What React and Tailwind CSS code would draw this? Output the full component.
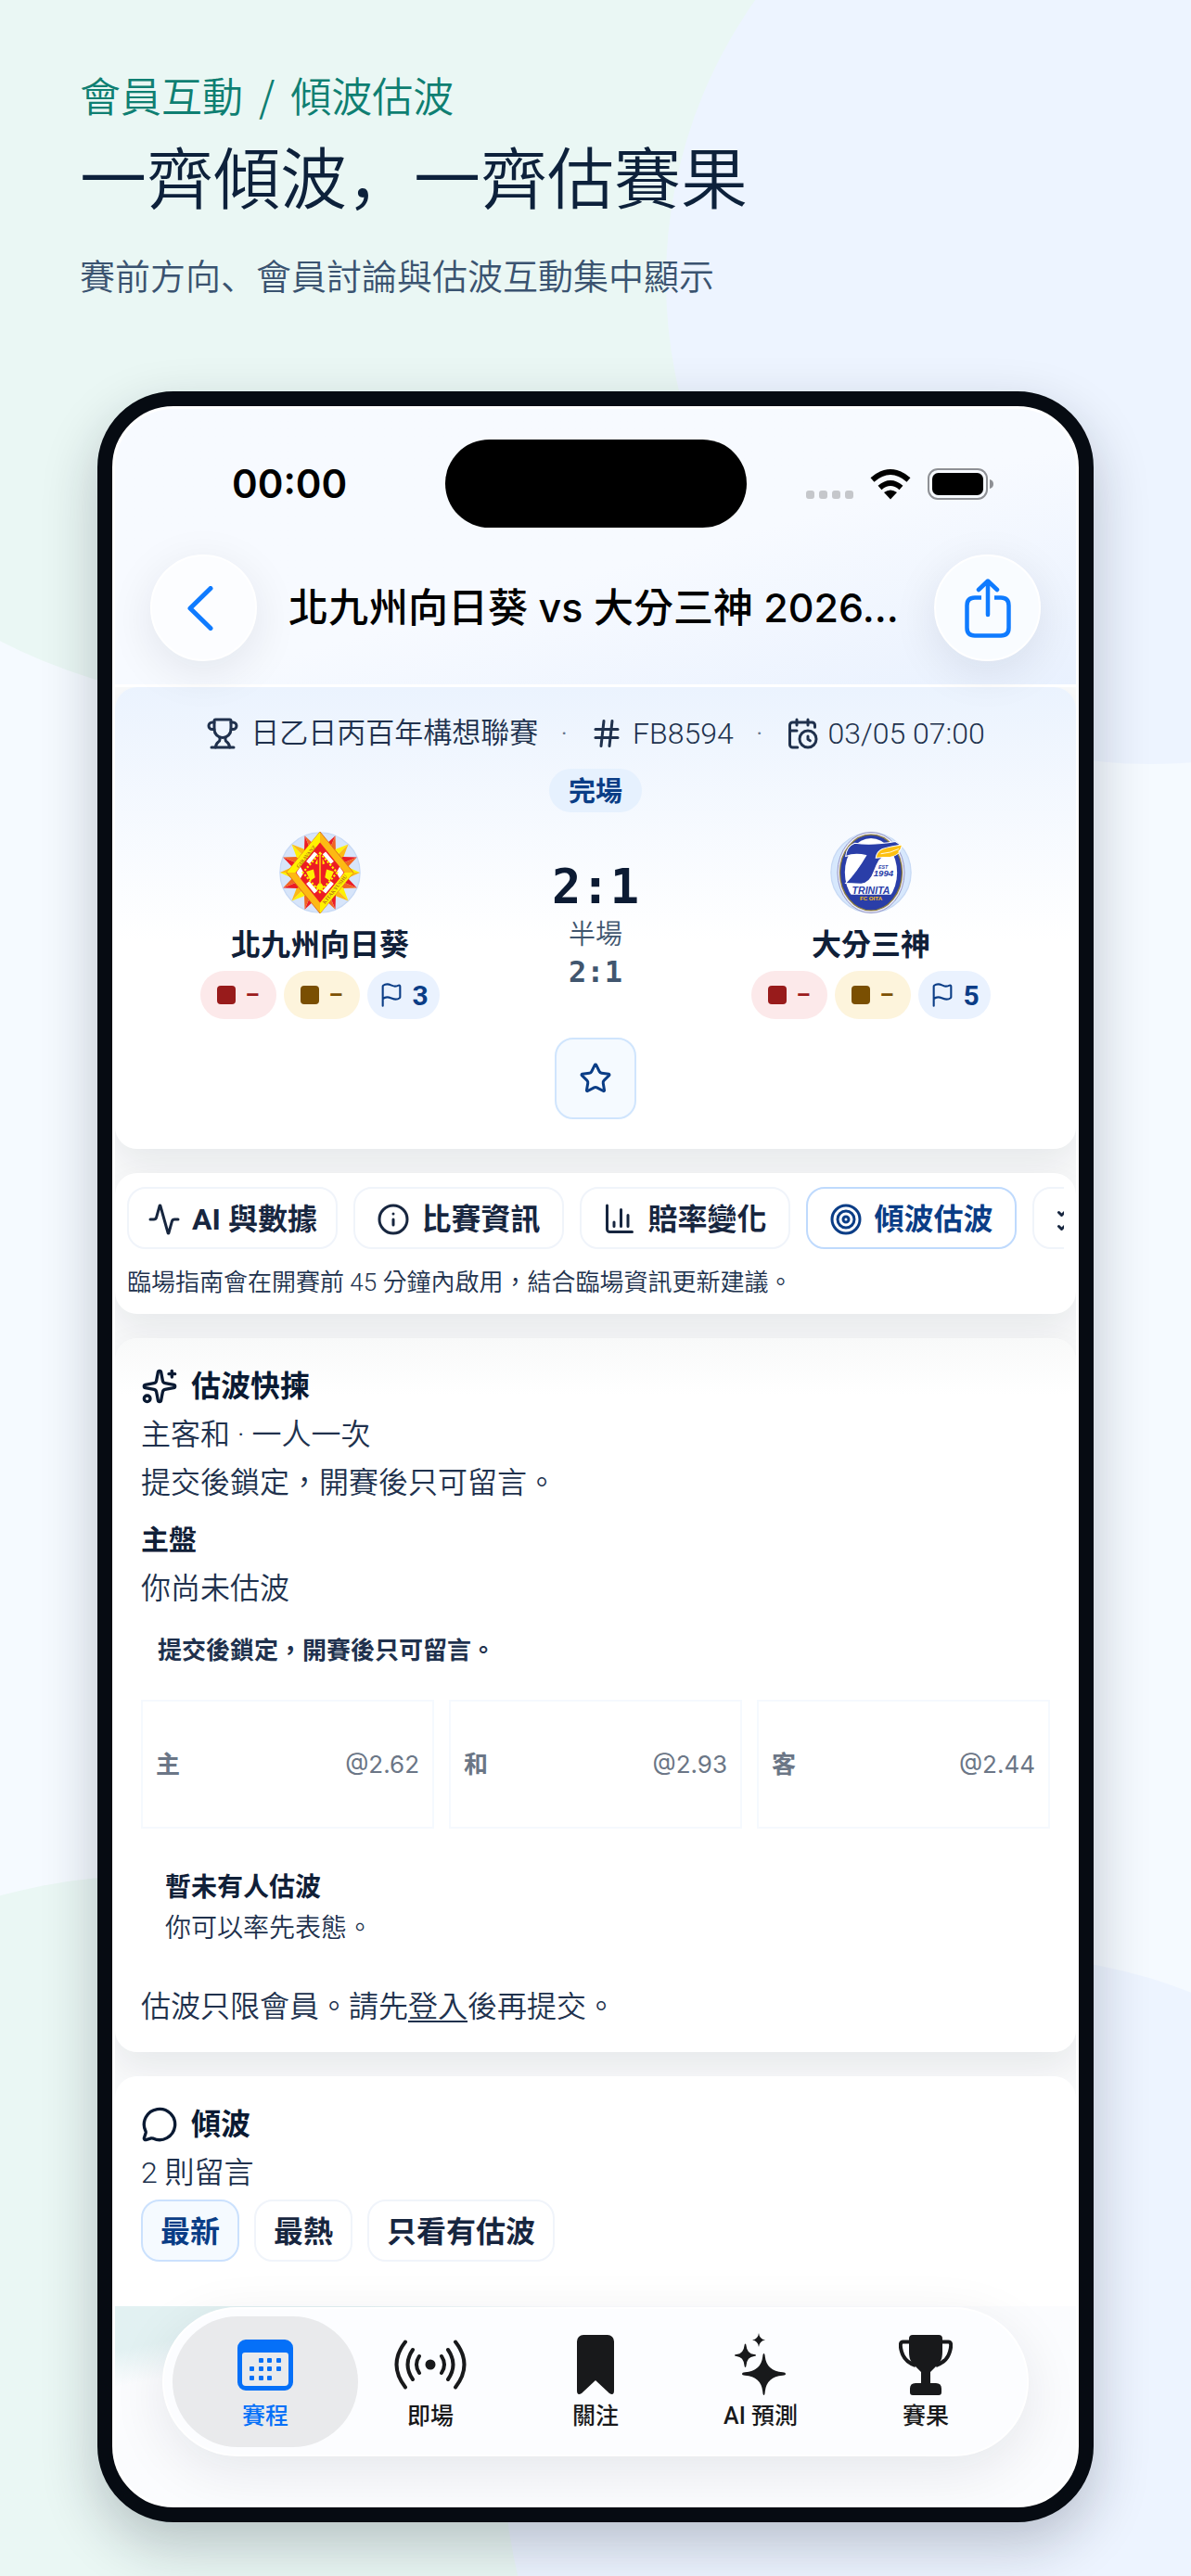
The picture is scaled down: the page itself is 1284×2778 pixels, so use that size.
import React, { useState } from 'react';
import {
  Activity,
  CalendarClock,
  Flag,
  Hash,
  Info,
  ListChecks,
  MessageCircle,
  Sparkles,
  Star,
  Target,
  Trophy,
} from 'lucide-react';

const TABS = [
  { id: 'ai', label: 'AI 與數據', icon: Activity },
  { id: 'info', label: '比賽資訊', icon: Info },
  { id: 'odds', label: '賠率變化', icon: OddsIcon },
  { id: 'talk', label: '傾波估波', icon: Target },
  { id: 'lineup', label: '', icon: ListChecks },
];

const ODDS = [
  { label: '主', price: '@2.62' },
  { label: '和', price: '@2.93' },
  { label: '客', price: '@2.44' },
];

const FILTERS = ['最新', '最熱', '只看有估波'];

const NAV = [
  { label: '賽程', icon: CalendarGlyph },
  { label: '即場', icon: LiveGlyph },
  { label: '關注', icon: BookmarkGlyph },
  { label: 'AI 預測', icon: SparkGlyph },
  { label: '賽果', icon: CupGlyph },
];

function OddsIcon({ className, strokeWidth = 2 }) {
  return (
    <svg viewBox="0 0 24 24" fill="none" stroke="currentColor" strokeWidth={strokeWidth} strokeLinecap="round" strokeLinejoin="round" className={className}>
      <path d="M3 2v17a2 2 0 0 0 2 2h16" />
      <path d="M8 17v-3M13 17V5M18 17V9" />
    </svg>
  );
}

function CalendarGlyph() {
  const dots = [[27, 23], [36, 23], [46, 23], [17, 32], [27, 32], [36, 32], [46, 32], [17, 42], [27, 42], [36, 42]];
  return (
    <svg viewBox="0 0 60 55" className="w-[60px] h-[55px]">
      <path fill="currentColor" fillRule="evenodd" d="M9 0h42a9 9 0 0 1 9 9v37a9 9 0 0 1-9 9H9a9 9 0 0 1-9-9V9a9 9 0 0 1 9-9zM8 14a3 3 0 0 0-3 3v29a4 4 0 0 0 4 4h42a4 4 0 0 0 4-4V17a3 3 0 0 0-3-3z" />
      {dots.map(([x, y]) => (
        <rect key={`${x}-${y}`} x={x - 4} y={y - 3} width="5" height="5" rx="1" fill="currentColor" />
      ))}
    </svg>
  );
}

function LiveGlyph() {
  return (
    <svg viewBox="0 0 78 54" className="w-[78px] h-[54px]" fill="none" stroke="currentColor" strokeWidth="4" strokeLinecap="round">
      <circle cx="39" cy="27" r="5.5" fill="currentColor" stroke="none" />
      <path d="M27 18q-6 9 0 18M20 11q-11 16 0 32M12 2.5q-19 24.5 0 49" />
      <path d="M51 18q6 9 0 18M58 11q11 16 0 32M66 2.5q19 24.5 0 49" />
    </svg>
  );
}

function BookmarkGlyph() {
  return (
    <svg viewBox="0 0 40 64" className="w-[40px] h-[64px]" fill="currentColor">
      <path d="M7 0h26a7 7 0 0 1 7 7v53q0 6-5 3L20 49 5 63q-5 3-5-3V7a7 7 0 0 1 7-7z" />
    </svg>
  );
}

function SparkGlyph() {
  return (
    <svg viewBox="0 0 56 68" className="w-[56px] h-[68px]" fill="currentColor">
      <path d="M31.5 22q1 0 1.3 3.5 1.7 15.5 19 16.7 3.2.3 3.2 1.8t-3.2 1.8q-17.3 1.2-19 17.2-.3 4-1.3 4t-1.3-4q-1.7-16-19-17.2Q8 45.5 8 44t3.2-1.8q17.3-1.2 19-16.7.3-3.5 1.3-3.5z" />
      <path d="M11.5 11.5q.8 0 1 2 .8 8.8 8.5 9.5 2 .2 2 1t-2 1q-7.7.7-8.5 10-.2 2-1 2t-1-2Q9.7 25.7 2 25q-2-.2-2-1t2-1q7.7-.7 8.5-9.5.2-2 1-2z" />
      <path d="M26 0q.7 6.5 7 7.5-6.3 1-7 7.5-.7-6.5-7-7.5 6.3-1 7-7.5z" />
    </svg>
  );
}

function CupGlyph() {
  return (
    <svg viewBox="0 0 58 65" className="w-[58px] h-[65px]">
      <path fill="none" stroke="currentColor" strokeWidth="4" d="M14 7.5H4.5Q0 7.5 3 18q3 11 15 15M44 7.5h9.5Q58 7.5 55 18q-3 11-15 15" />
      <path fill="currentColor" d="M15 0h28a4 4 0 0 1 4 4v14c0 8-2 12-7 16l-6 6v12h6q6 0 6 6v4q0 3-3 3H15q-3 0-3-3v-4q0-6 6-6h6V40l-6-6c-5-4-7-8-7-16V4a4 4 0 0 1 4-4z" />
    </svg>
  );
}

function HomeCrest() {
  const spikes = [];
  const colors = [['#fff200', '#fdb913'], ['#ed1c24', '#f26522']];
  const point = (deg, r) => `${50 + r * Math.sin((deg * Math.PI) / 180)},${50 - r * Math.cos((deg * Math.PI) / 180)}`;
  for (let i = 0; i < 16; i += 1) {
    const angle = i * 22.5;
    const [light, dark] = colors[i % 2];
    spikes.push(
      <g key={i}>
        <polygon points={`${point(angle, 49)} ${point(angle - 12, 34)} 50,50`} fill={light} />
        <polygon points={`${point(angle, 49)} ${point(angle + 12, 34)} 50,50`} fill={dark} />
      </g>
    );
  }
  return (
    <svg viewBox="0 0 100 100" className="size-[88px]">
      <circle cx="50" cy="50" r="49" fill="#d7e5fa" stroke="#c8daf5" strokeWidth="1.5" />
      {spikes}
      <polygon points="50,0 91,50 50,100 9,50" fill="#fdb913" stroke="#d9661c" strokeWidth="1" />
      <polygon points="50,0 9,50 21,50 50,13" fill="#fff200" />
      <polygon points="50,100 91,50 79,50 50,87" fill="#fff200" />
      <polygon points="50,13 80,50 50,87 20,50" fill="#ed1c24" />
      <path d="M35 38l10-12M65 38L55 26M35 62l10 12M65 62L55 74" stroke="#ffffff" strokeWidth="5" />
      <path d="M21 50l5-7 4 7-4 7zM79 50l-5-7-4 7 4 7z" fill="#ffffff" />
      <polygon points="50,26 71,50 50,74 29,50" fill="#ed1c24" stroke="#fff200" strokeWidth="2.5" strokeDasharray="2.5 2" />
      <path d="M33 49l9-3 2 10-6 4zM67 49l-9-3-2 10 6 4zM44 39l3-6v7zM56 39l-3-6v7zM45 68l5-7 5 7-5 4z" fill="#fff200" />
      <path d="M50 28v36" stroke="#fdb913" strokeWidth="2" />
      <text transform="translate(24 45) rotate(-51)" fontSize="6.5" fill="#b5711a" className="font-['Liberation_Serif'] font-bold">GIRAVANZ</text>
      <text transform="translate(56 89) rotate(-51)" fontSize="6.5" fill="#b5711a" className="font-['Liberation_Serif'] font-bold">KITAKYUSHU</text>
    </svg>
  );
}

function AwayCrest() {
  return (
    <svg viewBox="0 0 100 100" className="size-[88px]">
      <circle cx="50" cy="50" r="49" fill="#d7e8fd" stroke="#c8daf5" strokeWidth="1.5" />
      <ellipse cx="50" cy="50" rx="41" ry="49.5" fill="#e9e9f5" stroke="#8d8fc4" strokeWidth="1" />
      <ellipse cx="50" cy="50" rx="38" ry="46.5" fill="#2a3ea8" stroke="#8b7b3c" strokeWidth="1.5" />
      <ellipse cx="50" cy="50" rx="32" ry="42" fill="#ffffff" />
      <path d="M22 77h56Q68 93 50 93T22 77z" fill="#2a3ea8" />
      <path d="M30 14q22 3 50-2l6 4-6 10q-14 3-20 9-3 5-6 13-5 15-16 16l-19-1q14-15 25-34-14-3-25 1 1-12 11-16z" fill="#2a3ea8" stroke="#ffffff" strokeWidth="1.2" />
      <path d="M56 32q1-8 8-11 10-3 24-5-1 6-4 8 0 1 1 1-5 5-11 6-9 0-18 1z" fill="#fdc010" stroke="#ffffff" strokeWidth="1.2" />
      <path d="M62 27q12-1 22-6" stroke="#ffffff" strokeWidth="1" fill="none" />
      <text x="59" y="46" fontSize="6" fill="#2a3ea8" className="font-['Liberation_Sans'] font-bold italic">EST</text>
      <text x="53" y="55" fontSize="11" fill="#2a3ea8" className="font-['Liberation_Sans'] font-bold italic">1994</text>
      <text x="50" y="76" fontSize="12" textAnchor="middle" fill="#2a3ea8" className="font-['Liberation_Sans'] font-bold italic">TRINITA</text>
      <text x="50" y="84" fontSize="7" textAnchor="middle" fill="#fdc010" className="font-['Liberation_Sans'] font-bold">FC OITA</text>
    </svg>
  );
}

function StatusIcons() {
  return (
    <div className="flex items-center pl-16">
      <svg viewBox="0 0 51 34" className="w-[51px] h-[34px]" fill="#c5c7cb">
        {[0, 14, 28, 42].map((x) => (
          <rect key={x} x={x} y="24" width="9" height="9" rx="3" />
        ))}
      </svg>
      <svg viewBox="0 0 44 34" className="w-[44px] h-[34px] ml-[18px]" fill="none" stroke="#000000" strokeWidth="6">
        <path d="M2.5 12.5Q22-4.5 41.5 12.5" />
        <path d="M10.5 21q11.5-10 23 0" />
        <path d="M22 33.5l-7-7.5q7-5 14 0z" fill="#000000" stroke="none" />
      </svg>
      <svg viewBox="0 0 72 34" className="w-[72px] h-[34px] ml-[18px]">
        <rect x="1" y="1" width="63" height="32" rx="10" fill="none" stroke="#8e9095" strokeWidth="2" />
        <rect x="5" y="5" width="55" height="24" rx="6.5" fill="#000000" />
        <path d="M67 12q4 1 4 5t-4 5z" fill="#8e9095" />
      </svg>
    </div>
  );
}

function Team({ name, crest, corners }) {
  return (
    <div className="flex flex-col items-center">
      {crest}
      <h2 className="mt-3 text-[32px] leading-[44px] font-bold text-[#102038]">{name}</h2>
      <div className="mt-1.5 flex gap-2 text-[30px] font-bold">
        <span className="flex items-center justify-center gap-2.5 w-[82px] h-[52px] rounded-full bg-[#fce9ea] text-2xl text-[#9b1b1d]">
          <i className="size-5 rounded-sm bg-[#981b1b]" />–
        </span>
        <span className="flex items-center justify-center gap-2.5 w-[82px] h-[52px] rounded-full bg-[#fdf4dc] text-2xl text-[#7c5003]">
          <i className="size-5 rounded-sm bg-[#7a4f02]" />–
        </span>
        <span className="flex items-center justify-center gap-2 w-[78px] h-[52px] rounded-full bg-[#eaf2fe] text-[#0b3d86]">
          <Flag className="size-7" strokeWidth={1.8} />
          {corners}
        </span>
      </div>
    </div>
  );
}

export default function App() {
  const [tab, setTab] = useState('talk');
  const [filter, setFilter] = useState('最新');
  const [page, setPage] = useState('賽程');

  return (
    <div className="relative min-h-screen overflow-hidden bg-[#f5faff] pb-[58px] font-[350] font-['Roboto','Noto_Sans_CJK_TC',sans-serif]">
      <div className="absolute left-[-325px] top-[-442px] size-[1200px] rounded-full bg-[#eaf7f4]" />
      <div className="absolute left-[718px] top-[-220px] size-[1044px] rounded-full bg-[#edf4ff]" />
      <div className="absolute left-[-424px] top-[2023px] size-[1160px] rounded-full bg-[#eaf7f4]" />
      <div className="absolute left-[543px] top-[2110px] size-[1080px] rounded-full bg-[#edf4ff]" />

      <header className="relative px-[86px] pt-[74px] font-['Noto_Sans_CJK_SC',sans-serif]">
        <p className="flex gap-[17px] text-[44px] leading-[56px] text-[#0f7f72]">
          <span>會員互動</span>
          <span>/</span>
          <span>傾波估波</span>
        </p>
        <h1 className="mt-3.5 text-7xl leading-[88px] text-[#0d213b]">一齊傾波，一齊估賽果</h1>
        <p className="mt-10 text-[38px] leading-[48px] text-[#3a5370]">賽前方向、會員討論與估波互動集中顯示</p>
      </header>

      <div className="relative mt-[102px] mx-[105px] rounded-[82px] border-[16px] border-[#060b12] bg-white p-[3px] overflow-hidden shadow-[0_24px_60px_rgba(15,23,42,0.24)]">
        <div className="rounded-[63px] overflow-hidden bg-[#f9fafb]">
          {/* Status bar + title bar */}
          <div className="relative bg-linear-165 from-[#f7faff] from-55% to-[#e9f1fe] pt-[33px] pb-[25px] border-b-[3px] border-white">
            <div className="grid grid-cols-[1fr_325px_1fr] items-center">
              <span className="pl-[126px] font-['Inter'] text-[42px] font-semibold text-black">00:00</span>
              <div className="h-[95px] rounded-full bg-black" />
              <StatusIcons />
            </div>
            <div className="mt-[29px] flex items-center px-[38px]">
              <button aria-label="返回" className="flex items-center justify-center size-[115px] pr-2 shrink-0 rounded-full border-2 border-white bg-[#fcfdff] shadow-[0_12px_50px_rgba(15,23,42,0.09)]">
                <svg viewBox="0 0 28 48" className="w-[28px] h-[48px]" fill="none" stroke="#0f7bff" strokeWidth="5" strokeLinecap="round" strokeLinejoin="round">
                  <path d="M25 2.5L3 24l22 21.5" />
                </svg>
              </button>
              <p className="grow pr-1 text-center whitespace-nowrap text-[43px] font-medium text-black font-['Inter','Noto_Sans_CJK_TC',sans-serif]">北九州向日葵 vs 大分三神 2026...</p>
              <button aria-label="分享" className="flex items-center justify-center size-[115px] shrink-0 rounded-full border-2 border-white bg-[#f9fcff] shadow-[0_12px_50px_rgba(15,23,42,0.09)]">
                <svg viewBox="0 0 50 64" className="w-[50px] h-[64px]" fill="none" stroke="#0f7bff" strokeWidth="4.5" strokeLinecap="round" strokeLinejoin="round">
                  <path d="M18 20.5h-7q-8.5 0-8.5 8.5v24q0 8.5 8.5 8.5h28q8.5 0 8.5-8.5V29q0-8.5-8.5-8.5h-7" strokeLinecap="butt" />
                  <path d="M25 39V3M15 12L25 2.5 35 12" />
                </svg>
              </button>
            </div>
          </div>

          <main className="flex flex-col gap-[26px]">
            <section className="rounded-3xl bg-linear-to-b from-[#ebf3fe] to-white to-55% pt-[26px] pb-8 shadow-[0_16px_40px_rgba(15,23,42,0.08)]">
              <div className="flex items-center justify-center gap-6 text-[32px] leading-[48px] text-[#20314d] whitespace-nowrap">
                <span className="flex items-center gap-3 text-[31px]"><Trophy className="size-9" />日乙日丙百年構想聯賽</span>
                <span className="text-[#64748b]">·</span>
                <span className="flex items-center gap-2.5"><Hash className="size-9" />FB8594</span>
                <span className="text-[#64748b]">·</span>
                <span className="flex items-center gap-2.5"><CalendarClock className="size-9" />03/05 07:00</span>
              </div>
              <div className="mt-3.5 flex justify-center">
                <span className="flex items-center justify-center w-[100px] h-[47px] pt-1 rounded-full bg-[#e6f1fe] text-[29px] font-bold text-[#0a3d86]">完場</span>
              </div>
              <div className="mt-[21px] grid grid-cols-[1fr_216px_1fr] items-center px-8">
                <Team name="北九州向日葵" crest={<HomeCrest />} corners={3} />
                <div className="text-center">
                  <p className="font-['DejaVu_Sans_Mono'] text-[52px] leading-[56px] font-bold text-[#0c1b33]">2:1</p>
                  <p className="mt-1 text-[29px] leading-[40px] text-[#41566f]">半場</p>
                  <p className="font-['DejaVu_Sans_Mono'] text-[32px] leading-[40px] font-bold text-[#41566f]">2:1</p>
                </div>
                <Team name="大分三神" crest={<AwayCrest />} corners={5} />
              </div>
              <div className="mt-5 flex justify-center">
                <button aria-label="收藏" className="flex items-center justify-center size-[88px] rounded-[20px] border-2 border-[#d0e5fd] bg-[#f5faff] text-[#0a3d86]">
                  <Star className="size-9" />
                </button>
              </div>
            </section>

            <section className="rounded-3xl bg-white px-[13px] pt-[15px] pb-4 shadow-[0_16px_40px_rgba(15,23,42,0.08)]">
              <div className="flex gap-[17px] overflow-hidden">
                {TABS.map(({ id, label, icon: Icon }) => (
                  <button
                    key={id}
                    aria-label={label || '陣容'}
                    onClick={() => setTab(id)}
                    className={`flex items-center gap-3 w-[227px] h-[67px] pt-0.5 shrink-0 rounded-[20px] border-2 text-[32px] font-bold whitespace-nowrap ${label ? 'justify-center' : 'pl-[22px]'} ${tab === id ? 'border-[#bfdafd] text-[#0a3d86]' : 'border-[#f0f4fa] text-[#17263f]'}`}
                  >
                    <Icon className="size-9" strokeWidth={2} />
                    {label}
                  </button>
                ))}
              </div>
              <p className="mt-[18px] text-[26px] leading-[36px] text-[#20314d]">臨場指南會在開賽前 45 分鐘內啟用，結合臨場資訊更新建議。</p>
            </section>

            <section className="rounded-3xl bg-linear-to-b from-[#f8f9f9] to-white to-8% px-7 pt-[26px] pb-[23px] text-[32px] leading-[52px] text-[#20314d] shadow-[0_16px_40px_rgba(15,23,42,0.08)]">
              <h2 className="flex items-center gap-3.5 font-bold text-[#0a1a33]"><Sparkles className="size-10" />估波快揀</h2>
              <p>主客和 · 一人一次</p>
              <p>提交後鎖定，開賽後只可留言。</p>
              <h3 className="mt-2.5 text-[30px] font-bold text-[#102038]">主盤</h3>
              <p>你尚未估波</p>
              <p className="mt-[23px] px-[18px] text-[26px] leading-[36px] font-bold">提交後鎖定，開賽後只可留言。</p>
              <div className="mt-[35px] grid grid-cols-3 gap-4">
                {ODDS.map(({ label, price }) => (
                  <button key={label} disabled className="flex items-center justify-between h-[139px] px-3.5 border-2 border-[#f5f9fe] text-[26px] text-[#6b7686]">
                    <span className="font-bold">{label}</span>
                    <span className="font-['Inter'] font-normal">{price}</span>
                  </button>
                ))}
              </div>
              <div className="mt-[42px] px-[26px] text-[28px] leading-[44px]">
                <p className="font-bold text-[#102038]">暫未有人估波</p>
                <p>你可以率先表態。</p>
              </div>
              <p className="mt-9">估波只限會員。請先<a href="#login" className="underline underline-offset-4 decoration-2">登入</a>後再提交。</p>
            </section>

            <section className="rounded-t-3xl bg-white px-7 pt-[26px] pb-12 text-[32px] leading-[52px] text-[#20314d]">
              <h2 className="flex items-center gap-3.5 font-bold text-[#0a1a33]"><MessageCircle className="size-10" />傾波</h2>
              <p>2 則留言</p>
              <div className="mt-[3px] flex gap-4">
                {FILTERS.map((name) => (
                  <button
                    key={name}
                    onClick={() => setFilter(name)}
                    className={`h-[67px] px-[19px] pt-0.5 flex items-center rounded-[20px] border-2 font-bold ${filter === name ? 'border-[#cbe1fd] bg-[#f5faff] text-[#0a3d86]' : 'border-[#f0f4fa] text-[#17263f]'}`}
                  >
                    {name}
                  </button>
                ))}
              </div>
            </section>
          </main>

          <footer className="relative bg-linear-170 from-[#e2f1f2] from-12% to-[#fbfcfe] to-22% px-[51px] pt-px pb-[52px]">
            <nav className="grid grid-cols-5 h-[161px] rounded-full border-2 border-white bg-[#fcfdff] px-5 py-2 shadow-[0_16px_60px_rgba(15,23,42,0.09)]">
              {NAV.map(({ label, icon: Icon }) => (
                <button
                  key={label}
                  onClick={() => setPage(label)}
                  className={`flex flex-col items-center rounded-full pt-[18px] -mx-[11px] text-[25px] leading-[36px] font-medium whitespace-nowrap ${page === label ? 'bg-[#e9eaec] text-[#0570f8]' : 'text-[#18191b]'}`}
                >
                  <span className="flex items-center h-[68px]"><Icon /></span>
                  <span className="mt-1">{label}</span>
                </button>
              ))}
            </nav>
          </footer>
        </div>
      </div>
    </div>
  );
}
